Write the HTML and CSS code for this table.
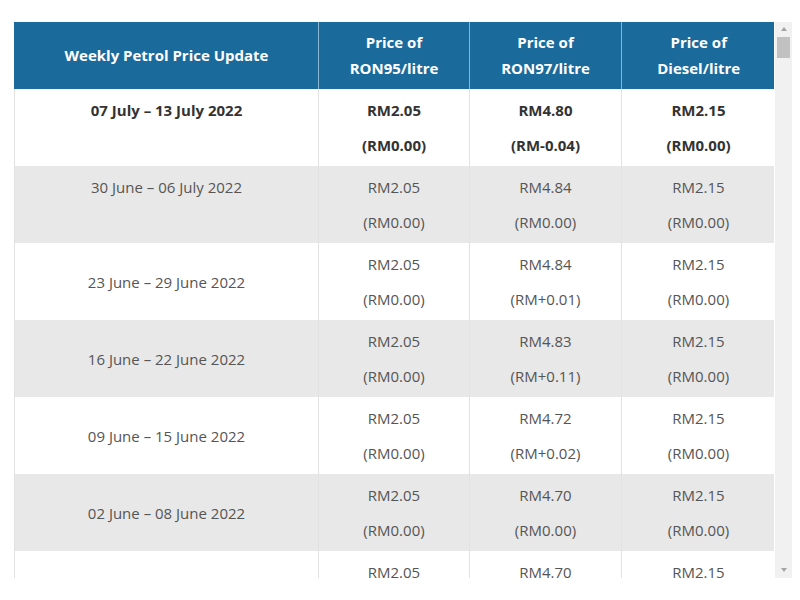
FILE: index.html
```html
<!DOCTYPE html>
<html>
<head>
<meta charset="utf-8">
<link rel="stylesheet" href="styles.css">
</head>
<body>
<div class="frame">
  <div class="viewport">
    <table class="prices">
      <colgroup>
        <col class="c-date"><col class="c-p1"><col class="c-p2"><col class="c-p3">
      </colgroup>
      <thead>
        <tr>
          <th>Weekly Petrol Price Update</th>
          <th>Price of<br>RON95/litre</th>
          <th>Price of<br>RON97/litre</th>
          <th>Price of<br>Diesel/litre</th>
        </tr>
      </thead>
      <tbody>
        <tr class="current">
          <td><div>07 July – 13 July 2022</div><div>&nbsp;</div></td>
          <td><div>RM2.05</div><div>(RM0.00)</div></td>
          <td><div>RM4.80</div><div>(RM-0.04)</div></td>
          <td><div>RM2.15</div><div>(RM0.00)</div></td>
        </tr>
        <tr class="alt">
          <td><div>30 June – 06 July 2022</div><div>&nbsp;</div></td>
          <td><div>RM2.05</div><div>(RM0.00)</div></td>
          <td><div>RM4.84</div><div>(RM0.00)</div></td>
          <td><div>RM2.15</div><div>(RM0.00)</div></td>
        </tr>
        <tr>
          <td><div>23 June – 29 June 2022</div></td>
          <td><div>RM2.05</div><div>(RM0.00)</div></td>
          <td><div>RM4.84</div><div>(RM+0.01)</div></td>
          <td><div>RM2.15</div><div>(RM0.00)</div></td>
        </tr>
        <tr class="alt">
          <td><div>16 June – 22 June 2022</div></td>
          <td><div>RM2.05</div><div>(RM0.00)</div></td>
          <td><div>RM4.83</div><div>(RM+0.11)</div></td>
          <td><div>RM2.15</div><div>(RM0.00)</div></td>
        </tr>
        <tr>
          <td><div>09 June – 15 June 2022</div></td>
          <td><div>RM2.05</div><div>(RM0.00)</div></td>
          <td><div>RM4.72</div><div>(RM+0.02)</div></td>
          <td><div>RM2.15</div><div>(RM0.00)</div></td>
        </tr>
        <tr class="alt">
          <td><div>02 June – 08 June 2022</div></td>
          <td><div>RM2.05</div><div>(RM0.00)</div></td>
          <td><div>RM4.70</div><div>(RM0.00)</div></td>
          <td><div>RM2.15</div><div>(RM0.00)</div></td>
        </tr>
        <tr>
          <td><div>26 May – 01 June 2022</div></td>
          <td><div>RM2.05</div><div>(RM0.00)</div></td>
          <td><div>RM4.70</div><div>(RM0.00)</div></td>
          <td><div>RM2.15</div><div>(RM0.00)</div></td>
        </tr>
      </tbody>
    </table>
  </div>
  <div class="scrollbar">
    <span class="arrow up"></span>
    <div class="track"><div class="thumb"></div></div>
    <span class="arrow down"></span>
  </div>
</div>
</body>
</html>
```
FILE: styles.css
```css
html, body {
  margin: 0;
  padding: 0;
  background: #ffffff;
}

body {
  font-family: "Open Sans", "Liberation Sans", sans-serif;
  font-size: 15px;
  color: #555555;
}

.frame {
  margin: 22px 0 0 14px;
  width: 778px;
  height: 556px;
  display: flex;
}

.viewport {
  flex: 1;
  overflow: hidden;
}

.prices {
  width: 761px;
  table-layout: fixed;
  border-collapse: collapse;
}

.c-date { width: 304px; }
.c-p1 { width: 151px; }
.c-p2 { width: 152px; }
.c-p3 { width: 154px; }

.prices th {
  background: #1b6a9c;
  color: #ffffff;
  font-weight: 700;
  line-height: 26px;
  height: 67px;
  padding: 0 8px 2px;
  box-sizing: border-box;
  text-align: center;
  vertical-align: middle;
  border-left: 1px solid #8ab6d4;
}

.prices th:first-child {
  border-left: 1px solid #1b6a9c;
}

.prices td {
  text-align: center;
  vertical-align: middle;
  padding: 4px 8px 3px;
  line-height: 35px;
  height: 77px;
  box-sizing: border-box;
  border-left: 1px solid #e2e2e2;
  border-right: 1px solid #e2e2e2;
}

.prices tr.alt td {
  background: #e8e8e8;
}

.prices tr.current td {
  font-weight: 700;
  color: #333333;
}

.scrollbar {
  width: 17px;
  margin-left: 1px;
  background: #f1f1f1;
  display: flex;
  flex-direction: column;
  align-items: center;
}

.arrow {
  width: 0;
  height: 0;
  border-left: 3.5px solid transparent;
  border-right: 3.5px solid transparent;
}

.arrow.up {
  margin-top: 5px;
  border-bottom: 4px solid #a3a3a3;
}

.arrow.down {
  margin-bottom: 6px;
  border-top: 4px solid #a3a3a3;
}

.track {
  flex: 1;
  width: 100%;
  padding: 6px 2px;
  box-sizing: border-box;
}

.thumb {
  height: 21px;
  background: #c1c1c1;
}
```
